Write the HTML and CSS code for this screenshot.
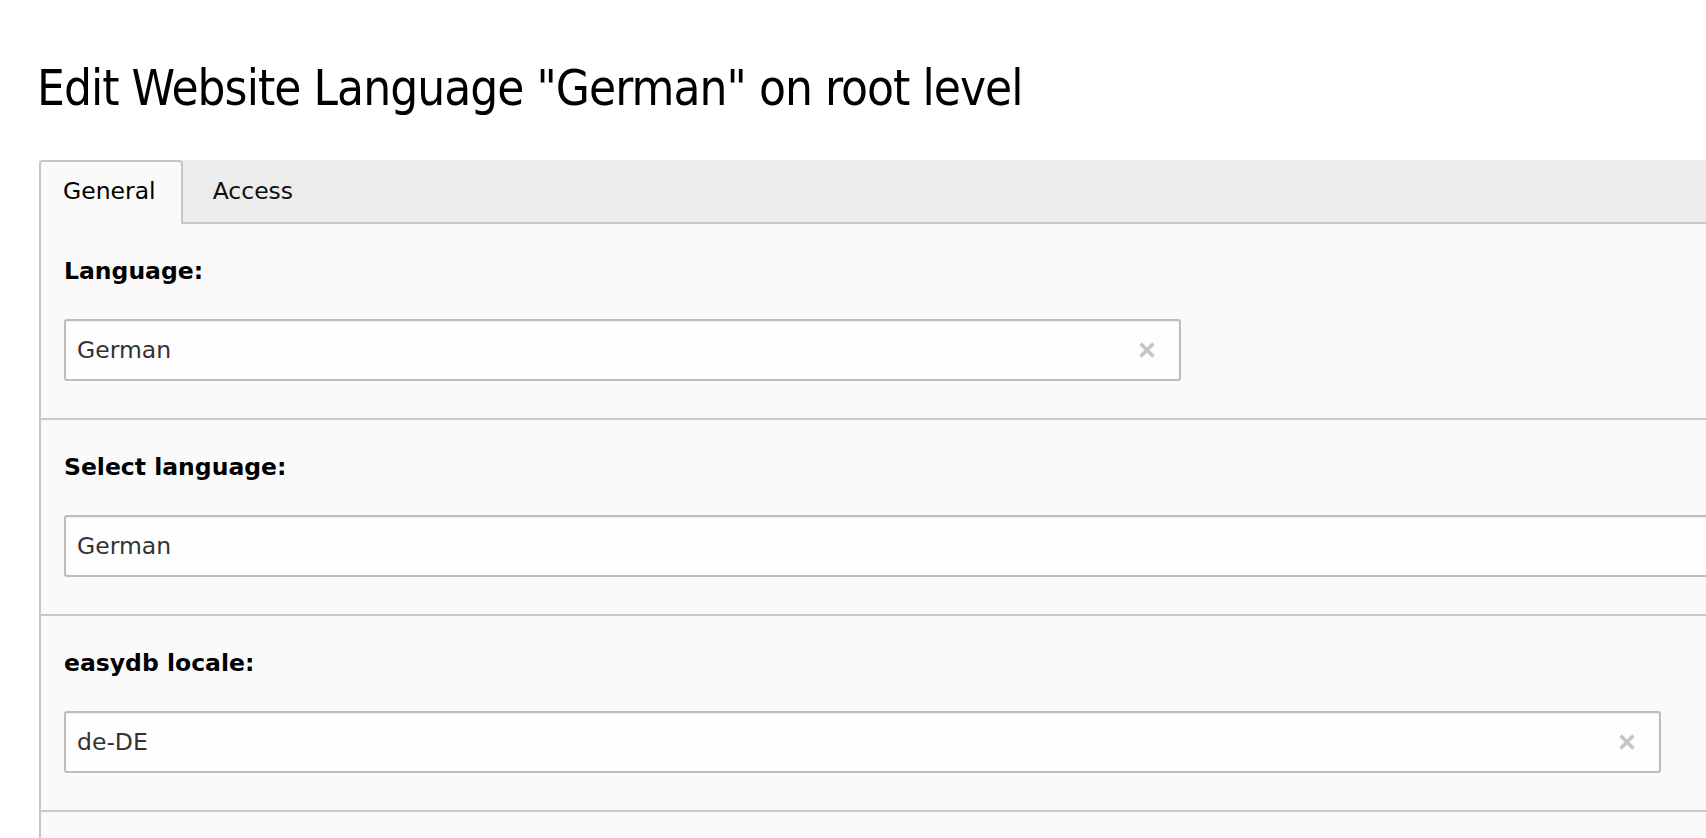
FILE: index.html
```html
<!DOCTYPE html>
<html lang="en">
<head>
<meta charset="utf-8">
<title>Edit Website Language</title>
<link rel="stylesheet" href="styles.css">
</head>
<body>
<div class="page">
  <h1 class="title">Edit Website Language "German" on root level</h1>
  <div class="panel">
    <div class="tabs">
      <div class="tab tab-active">General</div>
      <div class="tab">Access</div>
    </div>
    <div class="section">
      <div class="label">Language:</div>
      <div class="field field-short">
        <span class="value">German</span>
        <svg class="clear" width="16" height="16" viewBox="0 0 16 16"><path d="M1.5 1.5L14.5 14.5M14.5 1.5L1.5 14.5" stroke="#c6c6c6" stroke-width="3.6" fill="none"/></svg>
      </div>
    </div>
    <div class="section">
      <div class="label">Select language:</div>
      <div class="field field-full">
        <span class="value">German</span>
      </div>
    </div>
    <div class="section">
      <div class="label">easydb locale:</div>
      <div class="field field-mid">
        <span class="value">de-DE</span>
        <svg class="clear" width="16" height="16" viewBox="0 0 16 16"><path d="M1.5 1.5L14.5 14.5M14.5 1.5L1.5 14.5" stroke="#c6c6c6" stroke-width="3.6" fill="none"/></svg>
      </div>
    </div>
    <div class="section section-last"></div>
  </div>
</div>
</body>
</html>
```

FILE: styles.css
```css
html, body {
  margin: 0;
  padding: 0;
  background: #ffffff;
  overflow: hidden;
}

.page {
  padding: 60px 0 0 39px;
  font-family: "DejaVu Sans", Verdana, sans-serif;
  font-size: 23.5px;
  color: #000;
}

.title {
  margin: 0 0 43px -2px;
  font-family: "DejaVu Sans Condensed", "DejaVu Sans", sans-serif;
  font-stretch: condensed;
  font-weight: normal;
  font-size: 49px;
  line-height: 57px;
  letter-spacing: -0.95px;
  color: #000;
  white-space: nowrap;
}

.panel {
  width: 1720px;
  background: #fafafa;
  border-left: 2px solid #c6c6c6;
}

.tabs {
  display: flex;
  align-items: stretch;
  height: 62px;
  background: #ececec;
  border-bottom: 2px solid #c8c8c8;
  margin-left: -2px;
}

.tab {
  display: flex;
  align-items: center;
  padding: 0 25px 3px 22px;
  margin-right: 6px;
  border: 2px solid transparent;
  border-bottom: none;
  color: #111;
}

.tab-active {
  background: #fafafa;
  border-color: #c6c6c6;
  border-radius: 4px 4px 0 0;
  margin-bottom: -2px;
  padding-bottom: 5px;
  color: #000;
}

.section {
  padding: 31px 0 37px 23px;
  border-bottom: 2px solid #c9c9c9;
}

.section-last {
  height: 60px;
  padding: 0;
  border-bottom: none;
}

.label {
  font-weight: bold;
  line-height: 32px;
  margin-bottom: 32px;
  color: #000;
}

.field {
  box-sizing: border-box;
  height: 62px;
  display: flex;
  align-items: center;
  justify-content: space-between;
  padding: 0 24px 0 11px;
  background: #fefefe;
  border: 2px solid #bdbdbd;
  border-radius: 3px;
  box-shadow: inset 0 1px 2px rgba(0, 0, 0, 0.08);
  color: #333;
}

.field-short {
  width: 1117px;
}

.field-mid {
  width: 1597px;
}

.field-full {
  width: 1700px;
}

.clear {
  flex: none;
}
```
